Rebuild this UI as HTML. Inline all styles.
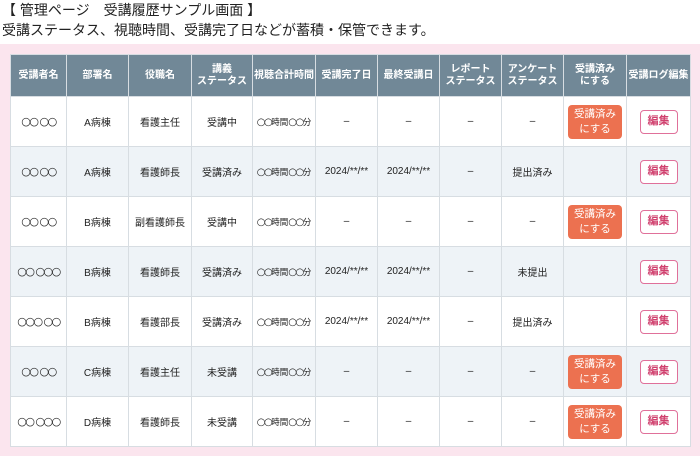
<!DOCTYPE html>
<html><head><meta charset="utf-8"><style>
body{margin:0;width:700px;height:460px;background:#fff;font-family:"Liberation Sans","Noto Sans CJK JP",sans-serif;color:#222;overflow:hidden;position:relative}
.t1{position:absolute;left:2px;top:0px;font-size:14px;line-height:20px}
.t2{position:absolute;left:2px;top:20px;font-size:14px;line-height:20px}
.panel{position:absolute;left:0;top:44px;width:700px;height:412px;background:#fbe5ee}
table{position:absolute;left:10px;top:54px;border-collapse:collapse;table-layout:fixed;width:680px}
th{background:#718897;color:#fff;font-size:10px;font-weight:bold;height:41px;border:1px solid #d7dde2;line-height:12px;padding:0}
td{height:49px;border:1px solid #d7dde2;font-size:10px;text-align:center;padding:0}
tr.w td{background:#fff}tr.g td{background:#eef3f7}
.s{font-size:8.5px}
.c{font-family:"DejaVu Sans",sans-serif;font-size:11px;letter-spacing:-1.5px}
.s .c{font-size:10px}
.b{display:inline-block;background:#ec7150;color:#fff;border-radius:4px;width:54px;height:34px;font-size:10.5px;line-height:15px;padding-top:2px;box-sizing:border-box}
.e{display:inline-block;border:1.5px solid #e0709a;color:#d0406e;border-radius:4px;width:38px;height:24px;line-height:21px;font-size:11px;font-weight:bold;box-sizing:border-box;background:#fff}
</style></head><body>
<div class="t1">【 管理ページ　受講履歴サンプル画面 】</div>
<div class="t2">受講ステータス、視聴時間、受講完了日などが蓄積・保管できます。</div>
<div class="panel"></div>
<table>
<colgroup><col style="width:56px"><col style="width:62px"><col style="width:63px"><col style="width:61px"><col style="width:63px"><col style="width:62px"><col style="width:62px"><col style="width:62px"><col style="width:62px"><col style="width:63px"><col style="width:64px"></colgroup>
<tr><th>受講者名</th><th>部署名</th><th>役職名</th><th>講義<br>ステータス</th><th>視聴合計時間</th><th>受講完了日</th><th>最終受講日</th><th>レポート<br>ステータス</th><th>アンケート<br>ステータス</th><th>受講済み<br>にする</th><th>受講ログ編集</th></tr>
<tr class="w"><td><span class="c">○○ ○○</span></td><td>A病棟</td><td>看護主任</td><td>受講中</td><td class="s"><span class="c">○○</span>時間<span class="c">○○</span>分</td><td>–</td><td>–</td><td>–</td><td>–</td><td><span class="b">受講済み<br>にする</span></td><td><span class="e">編集</span></td></tr>
<tr class="g"><td><span class="c">○○ ○○</span></td><td>A病棟</td><td>看護師長</td><td>受講済み</td><td class="s"><span class="c">○○</span>時間<span class="c">○○</span>分</td><td>2024/**/**</td><td>2024/**/**</td><td>–</td><td>提出済み</td><td></td><td><span class="e">編集</span></td></tr>
<tr class="w"><td><span class="c">○○ ○○</span></td><td>B病棟</td><td>副看護師長</td><td>受講中</td><td class="s"><span class="c">○○</span>時間<span class="c">○○</span>分</td><td>–</td><td>–</td><td>–</td><td>–</td><td><span class="b">受講済み<br>にする</span></td><td><span class="e">編集</span></td></tr>
<tr class="g"><td><span class="c">○○ ○○○</span></td><td>B病棟</td><td>看護師長</td><td>受講済み</td><td class="s"><span class="c">○○</span>時間<span class="c">○○</span>分</td><td>2024/**/**</td><td>2024/**/**</td><td>–</td><td>未提出</td><td></td><td><span class="e">編集</span></td></tr>
<tr class="w"><td><span class="c">○○○ ○○</span></td><td>B病棟</td><td>看護部長</td><td>受講済み</td><td class="s"><span class="c">○○</span>時間<span class="c">○○</span>分</td><td>2024/**/**</td><td>2024/**/**</td><td>–</td><td>提出済み</td><td></td><td><span class="e">編集</span></td></tr>
<tr class="g"><td><span class="c">○○ ○○</span></td><td>C病棟</td><td>看護主任</td><td>未受講</td><td class="s"><span class="c">○○</span>時間<span class="c">○○</span>分</td><td>–</td><td>–</td><td>–</td><td>–</td><td><span class="b">受講済み<br>にする</span></td><td><span class="e">編集</span></td></tr>
<tr class="w"><td><span class="c">○○ ○○○</span></td><td>D病棟</td><td>看護師長</td><td>未受講</td><td class="s"><span class="c">○○</span>時間<span class="c">○○</span>分</td><td>–</td><td>–</td><td>–</td><td>–</td><td><span class="b">受講済み<br>にする</span></td><td><span class="e">編集</span></td></tr>
</table>
</body></html>
